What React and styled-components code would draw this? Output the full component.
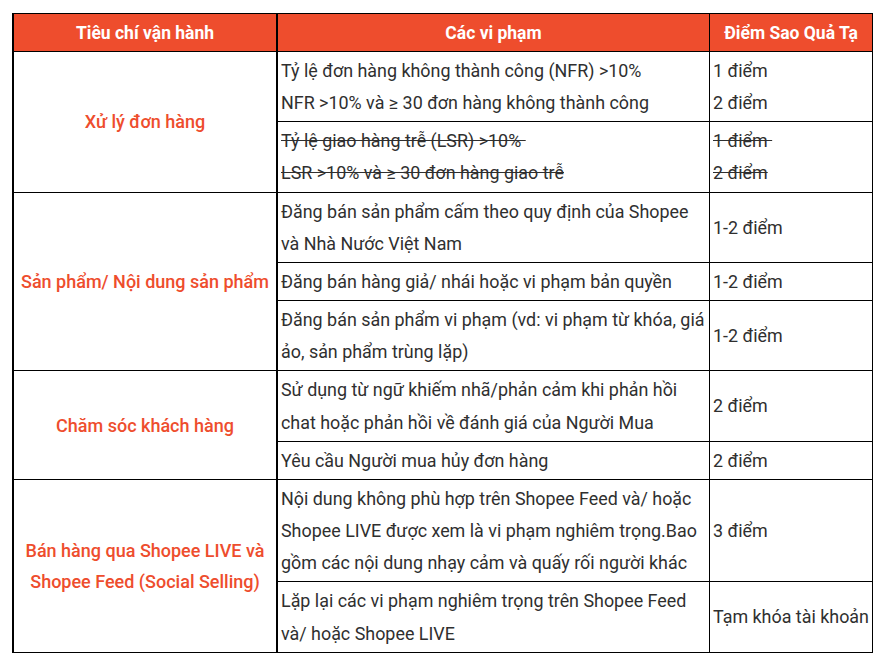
import React from "react";
import styled, { createGlobalStyle } from "styled-components";

const GlobalStyle = createGlobalStyle`
  html, body { margin: 0; padding: 0; background: #ffffff; }
  body { font-family: Roboto, "Noto Sans", "Liberation Sans", sans-serif; }
  * { box-sizing: border-box; }
`;

const Page = styled.div`
  padding: 13px 0 0 12px;
`;

const Grid = styled.div`
  display: grid;
  grid-template-columns: 264px 432px 163px;
  width: 861px;
  border-top: 1px solid #000;
  border-left: 2px solid #000;
`;

const HeadCell = styled.div`
  grid-column: ${(p) => p.$col};
  height: 38px;
  display: flex;
  align-items: center;
  justify-content: center;
  background: #ee4d2d;
  color: #ffffff;
  font-weight: 700;
  font-size: 17.5px;
  border-bottom: 1px solid #000;
  border-right: ${(p) => (p.$col === 1 ? "2px" : "1px")} solid #000;
`;

const CriteriaCell = styled.div`
  grid-column: 1;
  grid-row: span ${(p) => p.$span};
  display: flex;
  flex-direction: column;
  align-items: center;
  justify-content: center;
  text-align: center;
  color: #ee4d2d;
  font-weight: 500;
  font-size: 18px;
  line-height: 31px;
  border-right: 2px solid #000;
  border-bottom: 1px solid #000;
  padding: 0 2px;
  white-space: nowrap;
`;

const Cell = styled.div`
  grid-column: ${(p) => p.$col};
  display: flex;
  flex-direction: column;
  justify-content: center;
  color: #2f2f2f;
  font-size: 17.9px;
  line-height: 32.15px;
  padding: 3px 3px 2px 3px;
  border-right: 1px solid #000;
  border-bottom: 1px solid #000;
  white-space: nowrap;
  text-decoration: ${(p) => (p.$struck ? "line-through" : "none")};
`;

const Line = styled.span`
  display: block;
`;

const groups = [
  {
    title: ["Xử lý đơn hàng"],
    rows: [
      {
        text: [
          "Tỷ lệ đơn hàng không thành công (NFR) >10%",
          "NFR >10% và ≥ 30 đơn hàng không thành công",
        ],
        points: ["1 điểm", "2 điểm"],
      },
      {
        text: ["Tỷ lệ giao hàng trễ (LSR) >10%\u00a0", "LSR >10% và ≥ 30 đơn hàng giao trễ"],
        points: ["1 điểm\u00a0", "2 điểm"],
        struck: true,
      },
    ],
  },
  {
    title: ["Sản phẩm/ Nội dung sản phẩm"],
    rows: [
      {
        text: ["Đăng bán sản phẩm cấm theo quy định của Shopee", "và Nhà Nước Việt Nam"],
        points: ["1-2 điểm"],
      },
      {
        text: ["Đăng bán hàng giả/ nhái hoặc vi phạm bản quyền"],
        points: ["1-2 điểm"],
      },
      {
        text: [
          "Đăng bán sản phẩm vi phạm (vd: vi phạm từ khóa, giá",
          "ảo, sản phẩm trùng lặp)",
        ],
        points: ["1-2 điểm"],
      },
    ],
  },
  {
    title: ["Chăm sóc khách hàng"],
    rows: [
      {
        text: [
          "Sử dụng từ ngữ khiếm nhã/phản cảm khi phản hồi",
          "chat hoặc phản hồi về đánh giá của Người Mua",
        ],
        points: ["2 điểm"],
      },
      {
        text: ["Yêu cầu Người mua hủy đơn hàng"],
        points: ["2 điểm"],
      },
    ],
  },
  {
    title: ["Bán hàng qua Shopee LIVE và", "Shopee Feed (Social Selling)"],
    rows: [
      {
        text: [
          "Nội dung không phù hợp trên Shopee Feed và/ hoặc",
          "Shopee LIVE được xem là vi phạm nghiêm trọng.Bao",
          "gồm các nội dung nhạy cảm và quấy rối người khác",
        ],
        points: ["3 điểm"],
      },
      {
        text: [
          "Lặp lại các vi phạm nghiêm trọng trên Shopee Feed",
          "và/ hoặc Shopee LIVE",
        ],
        points: ["Tạm khóa tài khoản"],
      },
    ],
  },
];

export default function App() {
  return (
    <>
      <GlobalStyle />
      <Page>
        <Grid>
          <HeadCell $col={1}>Tiêu chí vận hành</HeadCell>
          <HeadCell $col={2}>Các vi phạm</HeadCell>
          <HeadCell $col={3}>Điểm Sao Quả Tạ</HeadCell>
          {groups.map((g, gi) => (
            <React.Fragment key={gi}>
              <CriteriaCell $span={g.rows.length}>
                {g.title.map((t, i) => (
                  <Line key={i}>{t}</Line>
                ))}
              </CriteriaCell>
              {g.rows.map((r, ri) => (
                <React.Fragment key={ri}>
                  <Cell $col={2} $struck={r.struck}>
                    {r.text.map((t, i) => (
                      <Line key={i}>{t}</Line>
                    ))}
                  </Cell>
                  <Cell $col={3} $struck={r.struck}>
                    {r.points.map((t, i) => (
                      <Line key={i}>{t}</Line>
                    ))}
                  </Cell>
                </React.Fragment>
              ))}
            </React.Fragment>
          ))}
        </Grid>
      </Page>
    </>
  );
}
